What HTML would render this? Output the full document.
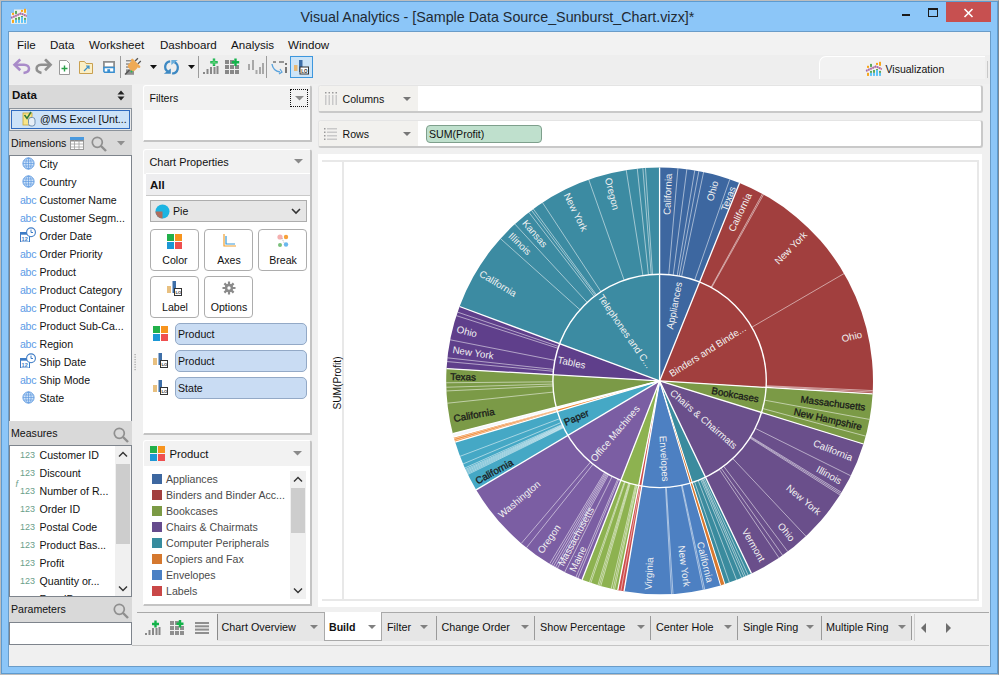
<!DOCTYPE html><html><head><meta charset="utf-8"><style>
*{margin:0;padding:0;box-sizing:border-box}
html,body{width:999px;height:675px;overflow:hidden;background:#8CC6F8;font-family:"Liberation Sans",sans-serif;color:#1a1a1a}
.a{position:absolute}
.t{position:absolute;white-space:nowrap;font-size:11px;line-height:13px}
</style></head><body><div class="a" style="left:0;top:0;width:999px;height:675px;border:1px solid #BDBDBD;border-right-color:#7A8A99"></div><div class="a" style="left:1px;top:1px;width:997px;height:673px;border:1px solid #5D9BD0"></div><div class="a" style="left:8px;top:31px;width:983px;height:636px;background:#F0F0F0;border:1px solid #6A9CC8"></div><div class="a" style="left:9px;top:32px;width:981px;height:23px;background:#F2F2F2"></div><div class="a" style="left:9px;top:55px;width:981px;height:29px;background:#EEEEEE"></div><svg class="a" style="left:9px;top:6px;" width="20" height="20" viewBox="0 0 20 20"><path d="M2 7 H17.8 V17.8 H2 Z" fill="#FAF6EE" opacity="0.9"/><path d="M5 3.5 H17.8 V7 H5 Z" fill="#FAF6EE" opacity="0.9"/><g fill="#F7A71B"><rect x="3" y="6.8" width="2" height="2.1"/><rect x="3" y="13.8" width="2" height="3.1"/><rect x="12" y="3.9" width="2" height="2"/><rect x="15" y="2.8" width="2" height="4"/></g><g fill="#5DA85D"><rect x="6" y="4.9" width="2" height="3"/><rect x="6" y="11.9" width="2" height="2"/><rect x="9" y="11" width="2" height="2.9"/><rect x="12" y="10" width="2" height="1"/><rect x="15" y="11.9" width="2" height="2"/></g><g fill="#5EC3F7"><rect x="6" y="13.9" width="2" height="3"/><rect x="9" y="13.9" width="2" height="3"/><rect x="12" y="11" width="2" height="5.9"/><rect x="15" y="13.9" width="2" height="3"/></g><polyline points="2.1,11.9 11.9,7.4 17.8,10.1" fill="none" stroke="#E79AA0" stroke-width="1.8"/><polyline points="2.1,11.9 11.9,7.4 17.8,10.1" fill="none" stroke="#8A6FC0" stroke-width="1.8" stroke-dasharray="1.2 1.2"/></svg><div class="t" style="left:300.5px;top:9.90px;font-size:14.3px;line-height:14.3px;color:#1F2A33">Visual Analytics - [Sample Data Source_Sunburst_Chart.vizx]*</div><div class="a" style="left:902px;top:14px;width:8px;height:2px;background:#1A1A1A"></div><div class="a" style="left:928px;top:8px;width:10px;height:9px;border:1px solid #1A1A1A;border-top-width:2px"></div><div class="a" style="left:946px;top:2px;width:45px;height:20px;background:#C75050"></div><svg class="a" style="left:963px;top:8px;" width="11" height="10" viewBox="0 0 11 10"><path d="M1.5 1 L9.5 9 M9.5 1 L1.5 9" stroke="#FFFFFF" stroke-width="1.6"/></svg><div class="t" style="left:17px;top:39.18px;font-size:11.6px;line-height:11.6px;color:#111">File</div><div class="t" style="left:50px;top:39.18px;font-size:11.6px;line-height:11.6px;color:#111">Data</div><div class="t" style="left:89px;top:39.18px;font-size:11.6px;line-height:11.6px;color:#111">Worksheet</div><div class="t" style="left:160px;top:39.18px;font-size:11.6px;line-height:11.6px;color:#111">Dashboard</div><div class="t" style="left:231px;top:39.18px;font-size:11.6px;line-height:11.6px;color:#111">Analysis</div><div class="t" style="left:288px;top:39.18px;font-size:11.6px;line-height:11.6px;color:#111">Window</div><svg class="a" style="left:10px;top:55px;" width="50" height="25" viewBox="0 0 50 25"><path d="M9.3 5.3 L4.6 9.8 L9.3 14.3" fill="none" stroke="#A98BC9" stroke-width="2.7" stroke-linecap="square"/><path d="M5 9.8 H14 C17.3 9.8 19 11.8 19 13.8 C19 16 17 17.6 13.5 17.9" fill="none" stroke="#A98BC9" stroke-width="2.5"/><path d="M36 5.3 L40.5 9.8 L36 14.3" fill="none" stroke="#8F8F8F" stroke-width="2.7" stroke-linecap="square"/><path d="M40 9.8 H31 C27.7 9.8 26.6 12 26.6 13.6 C26.6 15.6 28.3 17.3 31.5 17.9" fill="none" stroke="#8F8F8F" stroke-width="2.5"/></svg><svg class="a" style="left:58px;top:60px;" width="14" height="16" viewBox="0 0 14 16"><path d="M1.5 0.5 H8.5 L11.5 3.5 V14.5 H1.5 Z" fill="#FFF" stroke="#9A9A9A"/><path d="M6.5 5.5 V11.5 M3.5 8.5 H9.5" stroke="#2AA04A" stroke-width="1.4"/></svg><svg class="a" style="left:79px;top:60px;" width="16" height="15" viewBox="0 0 16 15"><path d="M0.5 1.5 H5.5 L7 3.5 H13.5 V13.5 H0.5 Z" fill="#FBEFC6" stroke="#C9A050"/><path d="M5 11 L10 6 M7 6 H10 V9" fill="none" stroke="#3A8FC8" stroke-width="1.2"/></svg><svg class="a" style="left:95px;top:55px;" width="50" height="25" viewBox="0 0 50 25"><path d="M8.9 6.9 H19.1 V12.5 H8.9 Z" fill="#FFF" stroke="#8F8F8F" stroke-width="1.8"/><path d="M8.9 12.5 H19.1 V17.2 H9.6 L8.9 16.5 Z" fill="#FFF" stroke="#3A8FD0" stroke-width="1.6"/><rect x="12.3" y="14.2" width="2.8" height="3" fill="#3A8FD0"/><g fill="#8F8F8F"><rect x="31" y="5" width="8" height="1.5"/><rect x="31" y="8.3" width="7" height="1.5"/><rect x="31" y="11.3" width="6" height="1.5"/><rect x="31" y="14.3" width="8" height="5.5"/></g><path d="M30 19.5 L34.5 15" stroke="#555" stroke-width="1.5"/><g transform="translate(38 11) rotate(45)"><rect x="-4.5" y="-4" width="9" height="8.5" rx="3" fill="#EFAA55"/><rect x="-6" y="-5" width="12" height="2.5" rx="1" fill="#EFAA55"/><path d="M-2 -5 V-9 M2 -5 V-9" stroke="#555" stroke-width="1.3"/></g><circle cx="36.5" cy="16.5" r="0.9" fill="#1FC24A"/></svg><div class="a" style="left:120px;top:56px;width:1px;height:22px;background:#9C9C9C"></div><svg class="a" style="left:150px;top:65px;" width="7" height="4" viewBox="0 0 7 4"><path d="M0 0 H7 L3.5 4 Z" fill="#111"/></svg><svg class="a" style="left:158px;top:54px;" width="26" height="26" viewBox="0 0 26 26"><path d="M12.2 7.3 A5.6 5.6 0 0 0 9.8 17.6" fill="none" stroke="#3D89C3" stroke-width="2.3"/><path d="M5.8 19.7 L12.8 19.7 L12.8 14.6 Z" fill="#3D89C3"/><path d="M13.3 5.9 L19.8 5.9 L13.3 11 Z" fill="#6AAEDC"/><path d="M16.6 8.4 A4.6 5.6 0 0 1 14.2 19.2" fill="none" stroke="#3D89C3" stroke-width="2.3"/></svg><svg class="a" style="left:188px;top:65px;" width="7" height="4" viewBox="0 0 7 4"><path d="M0 0 H7 L3.5 4 Z" fill="#111"/></svg><div class="a" style="left:198px;top:56px;width:1px;height:22px;background:#9C9C9C"></div><svg class="a" style="left:203px;top:58px;" width="16" height="17" viewBox="0 0 16 17"><rect x="0" y="14" width="2" height="2" fill="#888"/><rect x="3.5" y="11" width="2" height="5" fill="#888"/><rect x="7" y="9" width="2" height="7" fill="#888"/><rect x="10.5" y="9" width="2" height="7" fill="#888"/><rect x="13.5" y="8" width="2" height="8" fill="#888"/><path d="M11 0.5 V8 M7.3 4.2 H14.7" stroke="#13B24A" stroke-width="2.4"/><path d="M11 1.5 V7 M8.3 4.2 H13.7" stroke="#7BE08A" stroke-width="0.8"/></svg><svg class="a" style="left:225px;top:58px;" width="16" height="17" viewBox="0 0 16 17"><g fill="#888"><rect x="0" y="2" width="4" height="4"/><rect x="5" y="2" width="4" height="4"/><rect x="0" y="7" width="4" height="4"/><rect x="5" y="7" width="4" height="4"/><rect x="10" y="7" width="4" height="4"/><rect x="0" y="12" width="4" height="4"/><rect x="5" y="12" width="4" height="4"/><rect x="10" y="12" width="4" height="4"/></g><path d="M10.5 0.5 V8 M6.8 4.2 H14.2" stroke="#13B24A" stroke-width="2.4"/></svg><svg class="a" style="left:248px;top:58px;" width="16" height="17" viewBox="0 0 16 17"><g fill="#A8A8A8"><rect x="0" y="6" width="2" height="6"/><rect x="4" y="2" width="2" height="10"/><rect x="7.5" y="12" width="2" height="4"/><rect x="11" y="9" width="2" height="7"/><rect x="14" y="5" width="2" height="11"/></g></svg><div class="a" style="left:266px;top:56px;width:1px;height:22px;background:#9C9C9C"></div><svg class="a" style="left:271px;top:58px;" width="16" height="17" viewBox="0 0 16 17"><path d="M2 4 H5 M8 4 H13" stroke="#777" stroke-width="1.5"/><rect x="14" y="5" width="2" height="2" fill="#777"/><rect x="14" y="9" width="2" height="6" fill="#777"/><path d="M1 6 Q2 13 9 14" fill="none" stroke="#5AA3DD" stroke-width="1.4"/><path d="M9 11 L11 14 L8 16" fill="none" stroke="#5AA3DD" stroke-width="1.2"/></svg><div class="a" style="left:290px;top:56px;width:23px;height:22px;background:#CCE4F7;border:1px solid #3D97DE"></div><svg class="a" style="left:294px;top:59px;" width="15" height="16" viewBox="0 0 15 16"><rect x="0" y="6" width="3.5" height="6" fill="#E8B872"/><rect x="5" y="1" width="3.5" height="12" fill="#3E6FA8"/><rect x="6" y="8" width="8.5" height="7" fill="#FFF" stroke="#333" stroke-width="1"/><text x="7.3" y="13.7" font-size="4.5" font-family="Liberation Sans" font-weight="bold" fill="#333">LO</text></svg><div class="a" style="left:819px;top:56px;width:166px;height:23px;background:#F2F2F2;border-top:1px solid #FFF;border-left:1px solid #FFF;border-top-left-radius:7px"></div><div class="a" style="left:987px;top:61px;width:1px;height:17px;background:#C8C8C8"></div><svg class="a" style="left:863.5px;top:59.2px;" width="20" height="20" viewBox="0 0 20 20"><path d="M2 7 H17.8 V17.8 H2 Z" fill="#F2F2F2" opacity="0.9"/><path d="M5 3.5 H17.8 V7 H5 Z" fill="#F2F2F2" opacity="0.9"/><g fill="#F7A71B"><rect x="3" y="6.8" width="2" height="2.1"/><rect x="3" y="13.8" width="2" height="3.1"/><rect x="12" y="3.9" width="2" height="2"/><rect x="15" y="2.8" width="2" height="4"/></g><g fill="#5DA85D"><rect x="6" y="4.9" width="2" height="3"/><rect x="6" y="11.9" width="2" height="2"/><rect x="9" y="11" width="2" height="2.9"/><rect x="12" y="10" width="2" height="1"/><rect x="15" y="11.9" width="2" height="2"/></g><g fill="#5EC3F7"><rect x="6" y="13.9" width="2" height="3"/><rect x="9" y="13.9" width="2" height="3"/><rect x="12" y="11" width="2" height="5.9"/><rect x="15" y="13.9" width="2" height="3"/></g><polyline points="2.1,11.9 11.9,7.4 17.8,10.1" fill="none" stroke="#E79AA0" stroke-width="1.8"/><polyline points="2.1,11.9 11.9,7.4 17.8,10.1" fill="none" stroke="#8A6FC0" stroke-width="1.8" stroke-dasharray="1.2 1.2"/></svg><div class="t" style="left:885.5px;top:64.11px;font-size:10.5px;line-height:10.5px;color:#111">Visualization</div><div class="a" style="left:9px;top:85px;width:123px;height:23px;background:#D9D9D9"></div><div class="t" style="left:12px;top:90.27px;font-size:11.5px;line-height:11.5px;font-weight:bold;color:#111">Data</div><svg class="a" style="left:117px;top:90px;" width="8" height="10.6" viewBox="0 0 8 10.6"><path d="M0.5 4.5 L4 0.5 L7.5 4.5 Z M0.5 6.5 L4 10.5 L7.5 6.5 Z" fill="#222"/></svg><div class="a" style="left:9px;top:108px;width:123px;height:23px;background:#D9D9D9"></div><div class="a" style="left:9px;top:108px;width:123px;height:23px;background:#E8E8E8;border:1px solid #8C939B"></div><div class="a" style="left:11px;top:110px;width:119px;height:19px;background:#CCE2F8;border:1px solid #2F6BC0"></div><svg class="a" style="left:22px;top:110px;" width="14" height="17" viewBox="0 0 14 17"><rect x="1" y="3" width="9" height="12" fill="#F8E58A" stroke="#C8A838" stroke-width="0.8"/><path d="M2.5 5 L5 8.5 L9 2" fill="none" stroke="#2D7A3A" stroke-width="1.5"/><rect x="6.5" y="7.5" width="6.5" height="8.5" rx="2.5" fill="#E6EEF6" stroke="#6688AA" stroke-width="0.9"/></svg><div class="t" style="left:40px;top:114.03px;font-size:10.6px;line-height:10.6px;color:#111">@MS Excel [Unt...</div><div class="a" style="left:9px;top:131px;width:123px;height:24px;background:#D9D9D9"></div><div class="t" style="left:11px;top:138.03px;font-size:10.6px;line-height:10.6px;color:#111">Dimensions</div><svg class="a" style="left:70px;top:137px;" width="14" height="13" viewBox="0 0 14 13"><rect x="0.5" y="0.5" width="13" height="12" fill="#FFF" stroke="#9A9A9A"/><path d="M0.5 3.5 H13.5" stroke="#8A8A8A" stroke-width="2"/><path d="M0.5 7 H13.5 M0.5 10 H13.5 M4.5 0.5 V12.5 M9 0.5 V12.5" stroke="#A0A0A0" stroke-width="0.8"/><rect x="0" y="0" width="14" height="3" fill="#4A9ADF"/></svg><svg class="a" style="left:91px;top:136px;" width="16" height="16" viewBox="0 0 16 16"><circle cx="6.3" cy="6.3" r="5" fill="none" stroke="#8F8F8F" stroke-width="1.7"/><path d="M10 10 L15 15" stroke="#8F8F8F" stroke-width="2.4"/></svg><svg class="a" style="left:117px;top:141px;" width="8" height="5" viewBox="0 0 8 5"><path d="M0 0 H8 L4 4.5 Z" fill="#8F8F8F"/></svg><div class="a" style="left:9px;top:155px;width:123px;height:267px;background:#FFF;border:1px solid #7E848C"></div><svg class="a" style="left:22px;top:157px;" width="14" height="14" viewBox="0 0 14 14"><circle cx="6.5" cy="6.5" r="5.6" fill="#CFE3F9" stroke="#5E9AE0" stroke-width="1"/><path d="M1 6.5 H12 M6.5 1 V12 M2 4 H11 M2 9 H11" stroke="#5E9AE0" stroke-width="0.7"/><ellipse cx="6.5" cy="6.5" rx="2.6" ry="5.6" fill="none" stroke="#5E9AE0" stroke-width="0.7"/></svg><div class="t" style="left:39.5px;top:159.03px;font-size:10.6px;line-height:10.6px;color:#111">City</div><svg class="a" style="left:22px;top:175px;" width="14" height="14" viewBox="0 0 14 14"><circle cx="6.5" cy="6.5" r="5.6" fill="#CFE3F9" stroke="#5E9AE0" stroke-width="1"/><path d="M1 6.5 H12 M6.5 1 V12 M2 4 H11 M2 9 H11" stroke="#5E9AE0" stroke-width="0.7"/><ellipse cx="6.5" cy="6.5" rx="2.6" ry="5.6" fill="none" stroke="#5E9AE0" stroke-width="0.7"/></svg><div class="t" style="left:39.5px;top:177.03px;font-size:10.6px;line-height:10.6px;color:#111">Country</div><div class="t" style="left:20px;top:195.03px;font-size:10.6px;line-height:10.6px;color:#5B9BE6;letter-spacing:-0.3px">abc</div><div class="t" style="left:39.5px;top:195.03px;font-size:10.6px;line-height:10.6px;color:#111">Customer Name</div><div class="t" style="left:20px;top:213.03px;font-size:10.6px;line-height:10.6px;color:#5B9BE6;letter-spacing:-0.3px">abc</div><div class="t" style="left:39.5px;top:213.03px;font-size:10.6px;line-height:10.6px;color:#111">Customer Segm...</div><svg class="a" style="left:20px;top:227px;" width="16" height="15" viewBox="0 0 16 15"><rect x="0.5" y="5.5" width="9" height="9.5" fill="#FFF" stroke="#3E7CC6"/><rect x="0.5" y="5.5" width="9" height="2.2" fill="#3E7CC6"/><text x="1.6" y="13.8" font-size="5.5" font-weight="bold" font-family="Liberation Sans" fill="#3E7CC6">12</text><circle cx="11" cy="5.3" r="4.4" fill="#FFF" stroke="#3E7CC6" stroke-width="1.1"/><path d="M11 2.6 V5.5 H13" fill="none" stroke="#3E7CC6" stroke-width="1"/></svg><div class="t" style="left:39.5px;top:231.03px;font-size:10.6px;line-height:10.6px;color:#111">Order Date</div><div class="t" style="left:20px;top:249.03px;font-size:10.6px;line-height:10.6px;color:#5B9BE6;letter-spacing:-0.3px">abc</div><div class="t" style="left:39.5px;top:249.03px;font-size:10.6px;line-height:10.6px;color:#111">Order Priority</div><div class="t" style="left:20px;top:267.03px;font-size:10.6px;line-height:10.6px;color:#5B9BE6;letter-spacing:-0.3px">abc</div><div class="t" style="left:39.5px;top:267.03px;font-size:10.6px;line-height:10.6px;color:#111">Product</div><div class="t" style="left:20px;top:285.03px;font-size:10.6px;line-height:10.6px;color:#5B9BE6;letter-spacing:-0.3px">abc</div><div class="t" style="left:39.5px;top:285.03px;font-size:10.6px;line-height:10.6px;color:#111">Product Category</div><div class="t" style="left:20px;top:303.03px;font-size:10.6px;line-height:10.6px;color:#5B9BE6;letter-spacing:-0.3px">abc</div><div class="t" style="left:39.5px;top:303.03px;font-size:10.6px;line-height:10.6px;color:#111">Product Container</div><div class="t" style="left:20px;top:321.03px;font-size:10.6px;line-height:10.6px;color:#5B9BE6;letter-spacing:-0.3px">abc</div><div class="t" style="left:39.5px;top:321.03px;font-size:10.6px;line-height:10.6px;color:#111">Product Sub-Ca...</div><div class="t" style="left:20px;top:339.03px;font-size:10.6px;line-height:10.6px;color:#5B9BE6;letter-spacing:-0.3px">abc</div><div class="t" style="left:39.5px;top:339.03px;font-size:10.6px;line-height:10.6px;color:#111">Region</div><svg class="a" style="left:20px;top:353px;" width="16" height="15" viewBox="0 0 16 15"><rect x="0.5" y="5.5" width="9" height="9.5" fill="#FFF" stroke="#3E7CC6"/><rect x="0.5" y="5.5" width="9" height="2.2" fill="#3E7CC6"/><text x="1.6" y="13.8" font-size="5.5" font-weight="bold" font-family="Liberation Sans" fill="#3E7CC6">12</text><circle cx="11" cy="5.3" r="4.4" fill="#FFF" stroke="#3E7CC6" stroke-width="1.1"/><path d="M11 2.6 V5.5 H13" fill="none" stroke="#3E7CC6" stroke-width="1"/></svg><div class="t" style="left:39.5px;top:357.03px;font-size:10.6px;line-height:10.6px;color:#111">Ship Date</div><div class="t" style="left:20px;top:375.03px;font-size:10.6px;line-height:10.6px;color:#5B9BE6;letter-spacing:-0.3px">abc</div><div class="t" style="left:39.5px;top:375.03px;font-size:10.6px;line-height:10.6px;color:#111">Ship Mode</div><svg class="a" style="left:22px;top:391px;" width="14" height="14" viewBox="0 0 14 14"><circle cx="6.5" cy="6.5" r="5.6" fill="#CFE3F9" stroke="#5E9AE0" stroke-width="1"/><path d="M1 6.5 H12 M6.5 1 V12 M2 4 H11 M2 9 H11" stroke="#5E9AE0" stroke-width="0.7"/><ellipse cx="6.5" cy="6.5" rx="2.6" ry="5.6" fill="none" stroke="#5E9AE0" stroke-width="0.7"/></svg><div class="t" style="left:39.5px;top:393.03px;font-size:10.6px;line-height:10.6px;color:#111">State</div><svg class="a" style="left:134px;top:354px;" width="3" height="18" viewBox="0 0 3 18"><rect x="0.5" y="0.0" width="1.2" height="1.2" fill="#A0A0A0"/><rect x="0.5" y="2.5" width="1.2" height="1.2" fill="#A0A0A0"/><rect x="0.5" y="5.0" width="1.2" height="1.2" fill="#A0A0A0"/><rect x="0.5" y="7.5" width="1.2" height="1.2" fill="#A0A0A0"/><rect x="0.5" y="10.0" width="1.2" height="1.2" fill="#A0A0A0"/><rect x="0.5" y="12.5" width="1.2" height="1.2" fill="#A0A0A0"/><rect x="0.5" y="15.0" width="1.2" height="1.2" fill="#A0A0A0"/></svg><div class="a" style="left:9px;top:421px;width:123px;height:24px;background:#D9D9D9"></div><div class="t" style="left:11px;top:428.03px;font-size:10.6px;line-height:10.6px;color:#111">Measures</div><svg class="a" style="left:113px;top:427px;" width="16" height="16" viewBox="0 0 16 16"><circle cx="6.3" cy="6.3" r="5" fill="none" stroke="#8F8F8F" stroke-width="1.7"/><path d="M10 10 L15 15" stroke="#8F8F8F" stroke-width="2.4"/></svg><div class="a" style="left:9px;top:445px;width:123px;height:152px;background:#FFF;border:1px solid #7E848C;overflow:hidden"></div><div class="a" style="left:10px;top:446px;width:105px;height:150px;overflow:hidden"><div class="t" style="left:10px;top:5.08px;font-size:9px;line-height:9px;color:#6AA08A">123</div><div class="t" style="left:29.5px;top:3.73px;font-size:10.6px;line-height:10.6px;color:#111">Customer ID</div><div class="t" style="left:10px;top:23.08px;font-size:9px;line-height:9px;color:#6AA08A">123</div><div class="t" style="left:29.5px;top:21.73px;font-size:10.6px;line-height:10.6px;color:#111">Discount</div><div class="t" style="left:10px;top:41.08px;font-size:9px;line-height:9px;color:#6AA08A">123</div><div class="t" style="left:29.5px;top:39.73px;font-size:10.6px;line-height:10.6px;color:#111">Number of R...</div><div class="t" style="left:10px;top:59.08px;font-size:9px;line-height:9px;color:#6AA08A">123</div><div class="t" style="left:29.5px;top:57.73px;font-size:10.6px;line-height:10.6px;color:#111">Order ID</div><div class="t" style="left:10px;top:77.08px;font-size:9px;line-height:9px;color:#6AA08A">123</div><div class="t" style="left:29.5px;top:75.73px;font-size:10.6px;line-height:10.6px;color:#111">Postal Code</div><div class="t" style="left:10px;top:95.08px;font-size:9px;line-height:9px;color:#6AA08A">123</div><div class="t" style="left:29.5px;top:93.73px;font-size:10.6px;line-height:10.6px;color:#111">Product Bas...</div><div class="t" style="left:10px;top:113.08px;font-size:9px;line-height:9px;color:#6AA08A">123</div><div class="t" style="left:29.5px;top:111.73px;font-size:10.6px;line-height:10.6px;color:#111">Profit</div><div class="t" style="left:10px;top:131.08px;font-size:9px;line-height:9px;color:#6AA08A">123</div><div class="t" style="left:29.5px;top:129.73px;font-size:10.6px;line-height:10.6px;color:#111">Quantity or...</div><div class="t" style="left:10px;top:149.08px;font-size:9px;line-height:9px;color:#6AA08A">123</div><div class="t" style="left:29.5px;top:147.73px;font-size:10.6px;line-height:10.6px;color:#111">Row ID</div></div><div class="t" style="left:15.5px;top:480.38px;font-size:9px;line-height:9px;color:#6AA08A;font-style:italic">f</div><div class="a" style="left:115px;top:446px;width:16px;height:150px;background:#F0F0F0"></div><div class="a" style="left:116px;top:464px;width:14px;height:80px;background:#CDCDCD"></div><svg class="a" style="left:118px;top:451px;" width="10" height="7" viewBox="0 0 10 7"><path d="M1 5.5 L5 1.5 L9 5.5" fill="none" stroke="#333" stroke-width="1.4"/></svg><svg class="a" style="left:118px;top:585px;" width="10" height="7" viewBox="0 0 10 7"><path d="M1 1.5 L5 5.5 L9 1.5" fill="none" stroke="#333" stroke-width="1.4"/></svg><div class="a" style="left:9px;top:597px;width:123px;height:25px;background:#D9D9D9"></div><div class="t" style="left:11px;top:604.03px;font-size:10.6px;line-height:10.6px;color:#111">Parameters</div><svg class="a" style="left:113px;top:603px;" width="16" height="16" viewBox="0 0 16 16"><circle cx="6.3" cy="6.3" r="5" fill="none" stroke="#8F8F8F" stroke-width="1.7"/><path d="M10 10 L15 15" stroke="#8F8F8F" stroke-width="2.4"/></svg><div class="a" style="left:9px;top:622px;width:123px;height:23px;background:#FFF;border:1px solid #7E848C"></div><div class="a" style="left:143px;top:85px;width:169px;height:57px;background:#FFF;border:1px solid #FFF;border-right:2px solid #C4C4C4;border-bottom:2px solid #C4C4C4;border-radius:3px 3px 1px 1px;overflow:hidden"><div class="a" style="left:0;top:0;width:100%;height:24px;background:#F2F2F2"></div></div><div class="t" style="left:149.5px;top:93.03px;font-size:10.6px;line-height:10.6px;color:#111">Filters</div><div class="a" style="left:290px;top:89px;width:18px;height:18px;border:1px dotted #111"></div><svg class="a" style="left:295px;top:96px;" width="9" height="5" viewBox="0 0 9 5"><path d="M0 0 H9 L4.5 4.5 Z" fill="#8A8A8A"/></svg><div class="a" style="left:143px;top:149px;width:169px;height:286px;background:#FFF;border:1px solid #FFF;border-right:2px solid #C4C4C4;border-bottom:2px solid #C4C4C4;border-radius:3px 3px 1px 1px;overflow:hidden"><div class="a" style="left:0;top:0;width:100%;height:24px;background:#F2F2F2"></div></div><div class="t" style="left:149.5px;top:156.77px;font-size:10.9px;line-height:10.9px;color:#111">Chart Properties</div><svg class="a" style="left:294px;top:159px;" width="9" height="5" viewBox="0 0 9 5"><path d="M0 0 H9 L4.5 4.5 Z" fill="#8A8A8A"/></svg><div class="a" style="left:146px;top:173px;width:164px;height:23px;background:#EDEDEF;border-top:1px solid #FFF;border-bottom:1px solid #C9C9C9"></div><div class="t" style="left:150px;top:180.27px;font-size:11.5px;line-height:11.5px;font-weight:bold;color:#111">All</div><div class="a" style="left:150px;top:200px;width:157px;height:22px;background:#E6E6E6;border:1px solid #ADADAD"></div><svg class="a" style="left:155px;top:204px;" width="15" height="15" viewBox="0 0 15 15"><circle cx="7.5" cy="7.5" r="7" fill="#1BB4E2"/><path d="M7.5 7.5 V14.5 A7 7 0 0 1 0.5 7.5 Z" fill="#AB6D5E"/></svg><div class="t" style="left:173px;top:206.03px;font-size:10.6px;line-height:10.6px;color:#111">Pie</div><svg class="a" style="left:291px;top:208px;" width="10" height="7" viewBox="0 0 10 7"><path d="M1 1 L5 5 L9 1" fill="none" stroke="#333" stroke-width="1.6"/></svg><div class="a" style="left:150px;top:229px;width:49px;height:42px;background:#FFF;border:1px solid #ADADAD;border-radius:4px"></div><svg class="a" style="left:166px;top:234px;" width="18" height="16" viewBox="0 0 18 16"><rect x="1" y="0" width="7" height="7" fill="#22B04A"/><rect x="9" y="0" width="7" height="7" fill="#F7941E"/><rect x="1" y="8" width="7" height="7" fill="#1C97D5"/><rect x="9" y="8" width="7" height="7" fill="#EF4F4F"/></svg><div class="t" style="left:150.5px;top:254.53px;width:49px;text-align:center;font-size:10.6px;line-height:10.6px;color:#111">Color</div><div class="a" style="left:204px;top:229px;width:49px;height:42px;background:#FFF;border:1px solid #ADADAD;border-radius:4px"></div><svg class="a" style="left:220px;top:234px;" width="18" height="16" viewBox="0 0 18 16"><path d="M4 0 V12 H16" fill="none" stroke="#F0A030" stroke-width="1.2"/><path d="M6 2 V10 H15" fill="none" stroke="#3A9AD9" stroke-width="1.2"/></svg><div class="t" style="left:204.5px;top:254.53px;width:49px;text-align:center;font-size:10.6px;line-height:10.6px;color:#111">Axes</div><div class="a" style="left:258px;top:229px;width:49px;height:42px;background:#FFF;border:1px solid #ADADAD;border-radius:4px"></div><svg class="a" style="left:274px;top:234px;" width="18" height="16" viewBox="0 0 18 16"><circle cx="6" cy="3" r="2.6" fill="#F4B0B0"/><circle cx="12" cy="3" r="2.2" fill="#F7A13A"/><circle cx="6" cy="11" r="2" fill="#7BC07B"/><circle cx="12" cy="10.5" r="2.2" fill="#6AB8EE"/><path d="M8 4 L10 9" stroke="#999" stroke-width="0.7" stroke-dasharray="1,1"/></svg><div class="t" style="left:258.5px;top:254.53px;width:49px;text-align:center;font-size:10.6px;line-height:10.6px;color:#111">Break</div><div class="a" style="left:150px;top:276px;width:49px;height:42px;background:#FFF;border:1px solid #ADADAD;border-radius:4px"></div><svg class="a" style="left:166px;top:281px;" width="18" height="16" viewBox="0 0 18 16"><rect x="1" y="5" width="4" height="7" fill="#E8C080"/><rect x="6.5" y="0" width="3.5" height="12" fill="#3E6FA8"/><rect x="8.5" y="7.5" width="7" height="7" fill="#FFF" stroke="#333" stroke-width="1"/><text x="9.5" y="13" font-size="4.2" font-family="Liberation Sans" font-weight="bold" fill="#333">LO</text></svg><div class="t" style="left:150.5px;top:301.53px;width:49px;text-align:center;font-size:10.6px;line-height:10.6px;color:#111">Label</div><div class="a" style="left:204px;top:276px;width:49px;height:42px;background:#FFF;border:1px solid #ADADAD;border-radius:4px"></div><svg class="a" style="left:220px;top:281px;" width="18" height="16" viewBox="0 0 18 16"><g transform="translate(9 7)"><circle r="4.2" fill="#8A8A8A"/><circle r="1.7" fill="#FFF"/><g stroke="#8A8A8A" stroke-width="2.2"><path d="M0 -6.5 V6.5 M-6.5 0 H6.5 M-4.6 -4.6 L4.6 4.6 M-4.6 4.6 L4.6 -4.6"/></g><circle r="1.7" fill="#FFF"/></g></svg><div class="t" style="left:204.5px;top:301.53px;width:49px;text-align:center;font-size:10.6px;line-height:10.6px;color:#111">Options</div><svg class="a" style="left:152px;top:326px;" width="17" height="16" viewBox="0 0 17 16"><rect x="1" y="0" width="7" height="7" fill="#22B04A"/><rect x="9" y="0" width="7" height="7" fill="#F7941E"/><rect x="1" y="8" width="7" height="7" fill="#1C97D5"/><rect x="9" y="8" width="7" height="7" fill="#EF4F4F"/></svg><div class="a" style="left:175px;top:323px;width:132px;height:22px;background:#C9DCF3;border:1px solid #93A9C6;border-radius:5px"></div><div class="t" style="left:178px;top:328.73px;font-size:10.6px;line-height:10.6px;color:#111">Product</div><svg class="a" style="left:152px;top:353px;" width="17" height="16" viewBox="0 0 17 16"><rect x="1" y="5" width="4" height="7" fill="#E8C080"/><rect x="6.5" y="0" width="3.5" height="12" fill="#3E6FA8"/><rect x="8.5" y="7.5" width="7" height="7" fill="#FFF" stroke="#333" stroke-width="1"/><text x="9.5" y="13" font-size="4.2" font-family="Liberation Sans" font-weight="bold" fill="#333">LO</text></svg><div class="a" style="left:175px;top:350px;width:132px;height:22px;background:#C9DCF3;border:1px solid #93A9C6;border-radius:5px"></div><div class="t" style="left:178px;top:355.73px;font-size:10.6px;line-height:10.6px;color:#111">Product</div><svg class="a" style="left:152px;top:380px;" width="17" height="16" viewBox="0 0 17 16"><rect x="1" y="5" width="4" height="7" fill="#E8C080"/><rect x="6.5" y="0" width="3.5" height="12" fill="#3E6FA8"/><rect x="8.5" y="7.5" width="7" height="7" fill="#FFF" stroke="#333" stroke-width="1"/><text x="9.5" y="13" font-size="4.2" font-family="Liberation Sans" font-weight="bold" fill="#333">LO</text></svg><div class="a" style="left:175px;top:377px;width:132px;height:22px;background:#C9DCF3;border:1px solid #93A9C6;border-radius:5px"></div><div class="t" style="left:178px;top:382.73px;font-size:10.6px;line-height:10.6px;color:#111">State</div><div class="a" style="left:143px;top:440px;width:169px;height:166px;background:#FFF;border:1px solid #FFF;border-right:2px solid #C4C4C4;border-bottom:2px solid #C4C4C4;border-radius:3px 3px 1px 1px;overflow:hidden"><div class="a" style="left:0;top:0;width:100%;height:25px;background:#F2F2F2"></div></div><svg class="a" style="left:149px;top:446px;" width="17" height="16" viewBox="0 0 17 16"><rect x="1" y="0" width="7" height="7" fill="#22B04A"/><rect x="9" y="0" width="7" height="7" fill="#F7941E"/><rect x="1" y="8" width="7" height="7" fill="#1C97D5"/><rect x="9" y="8" width="7" height="7" fill="#EF4F4F"/></svg><div class="t" style="left:169.5px;top:448.93px;font-size:11.3px;line-height:11.3px;color:#111">Product</div><svg class="a" style="left:293px;top:451px;" width="9" height="5" viewBox="0 0 9 5"><path d="M0 0 H9 L4.5 4.5 Z" fill="#8A8A8A"/></svg><div class="a" style="left:152px;top:474px;width:10px;height:10px;background:#3D67A0"></div><div class="t" style="left:166px;top:473.73px;font-size:10.6px;line-height:10.6px;color:#4A4A4A">Appliances</div><div class="a" style="left:152px;top:490px;width:10px;height:10px;background:#A23F3F"></div><div class="t" style="left:166px;top:489.73px;font-size:10.6px;line-height:10.6px;color:#4A4A4A">Binders and Binder Acc...</div><div class="a" style="left:152px;top:506px;width:10px;height:10px;background:#7B9A45"></div><div class="t" style="left:166px;top:505.73px;font-size:10.6px;line-height:10.6px;color:#4A4A4A">Bookcases</div><div class="a" style="left:152px;top:522px;width:10px;height:10px;background:#664B8D"></div><div class="t" style="left:166px;top:521.73px;font-size:10.6px;line-height:10.6px;color:#4A4A4A">Chairs &amp; Chairmats</div><div class="a" style="left:152px;top:538px;width:10px;height:10px;background:#378C9E"></div><div class="t" style="left:166px;top:537.73px;font-size:10.6px;line-height:10.6px;color:#4A4A4A">Computer Peripherals</div><div class="a" style="left:152px;top:554px;width:10px;height:10px;background:#D5782E"></div><div class="t" style="left:166px;top:553.73px;font-size:10.6px;line-height:10.6px;color:#4A4A4A">Copiers and Fax</div><div class="a" style="left:152px;top:570px;width:10px;height:10px;background:#4A80C4"></div><div class="t" style="left:166px;top:569.73px;font-size:10.6px;line-height:10.6px;color:#4A4A4A">Envelopes</div><div class="a" style="left:152px;top:586px;width:10px;height:10px;background:#C94747"></div><div class="t" style="left:166px;top:585.73px;font-size:10.6px;line-height:10.6px;color:#4A4A4A">Labels</div><div class="a" style="left:290px;top:471px;width:16px;height:128px;background:#F0F0F0"></div><div class="a" style="left:291px;top:488px;width:14px;height:45px;background:#CDCDCD"></div><svg class="a" style="left:293px;top:476px;" width="10" height="7" viewBox="0 0 10 7"><path d="M1 5.5 L5 1.5 L9 5.5" fill="none" stroke="#333" stroke-width="1.4"/></svg><svg class="a" style="left:293px;top:587px;" width="10" height="7" viewBox="0 0 10 7"><path d="M1 1.5 L5 5.5 L9 1.5" fill="none" stroke="#333" stroke-width="1.4"/></svg><div class="a" style="left:318px;top:85px;width:665px;height:28px;background:#FFF;border:1px solid #E4E4E4;border-right:2px solid #C9C9C9;border-bottom:2px solid #C9C9C9;border-radius:3px;overflow:hidden"><div class="a" style="left:0;top:0;width:99px;height:100%;background:#F2F1EE"></div></div><svg class="a" style="left:324px;top:92px;" width="14" height="14" viewBox="0 0 14 14"><rect x="1" y="0" width="1.5" height="1.5" fill="#9A9A9A"/><rect x="1" y="3" width="1.5" height="10" fill="#C9C9C9"/><rect x="4.5" y="0" width="1.5" height="1.5" fill="#9A9A9A"/><rect x="4.5" y="3" width="1.5" height="10" fill="#C9C9C9"/><rect x="8" y="0" width="1.5" height="1.5" fill="#9A9A9A"/><rect x="8" y="3" width="1.5" height="10" fill="#C9C9C9"/><rect x="11.5" y="0" width="1.5" height="1.5" fill="#9A9A9A"/><rect x="11.5" y="3" width="1.5" height="10" fill="#C9C9C9"/></svg><div class="t" style="left:342.5px;top:94.03px;font-size:10.6px;line-height:10.6px;color:#111">Columns</div><svg class="a" style="left:403px;top:97px;" width="8" height="5" viewBox="0 0 8 5"><path d="M0 0 H8 L4 4 Z" fill="#777"/></svg><div class="a" style="left:318px;top:120px;width:665px;height:28px;background:#FFF;border:1px solid #E4E4E4;border-right:2px solid #C9C9C9;border-bottom:2px solid #C9C9C9;border-radius:3px;overflow:hidden"><div class="a" style="left:0;top:0;width:99px;height:100%;background:#F2F1EE"></div></div><svg class="a" style="left:324px;top:127px;" width="14" height="14" viewBox="0 0 14 14"><rect x="0" y="1" width="1.5" height="1.5" fill="#9A9A9A"/><rect x="3" y="1" width="10" height="1.5" fill="#C9C9C9"/><rect x="0" y="4.5" width="1.5" height="1.5" fill="#9A9A9A"/><rect x="3" y="4.5" width="10" height="1.5" fill="#C9C9C9"/><rect x="0" y="8" width="1.5" height="1.5" fill="#9A9A9A"/><rect x="3" y="8" width="10" height="1.5" fill="#C9C9C9"/><rect x="0" y="11.5" width="1.5" height="1.5" fill="#9A9A9A"/><rect x="3" y="11.5" width="10" height="1.5" fill="#C9C9C9"/></svg><div class="t" style="left:342.5px;top:129.03px;font-size:10.6px;line-height:10.6px;color:#111">Rows</div><svg class="a" style="left:403px;top:132px;" width="8" height="5" viewBox="0 0 8 5"><path d="M0 0 H8 L4 4 Z" fill="#777"/></svg><div class="a" style="left:426px;top:125px;width:116px;height:18px;background:#BFE0CD;border:1px solid #7E9F8C;border-radius:4px"></div><div class="t" style="left:429px;top:129.03px;font-size:10.6px;line-height:10.6px;color:#111">SUM(Profit)</div><div class="a" style="left:318px;top:154px;width:664px;height:453px;background:#FFF"></div><div class="a" style="left:322px;top:160px;width:657px;height:441px;border-top:2px solid #E8E8E8;border-right:2px solid #E8E8E8;border-bottom:2px solid #E8E8E8"></div><div class="a" style="left:342px;top:160px;width:2px;height:441px;background:#E8E8E8"></div><div class="t" style="left:307.5px;top:377px;width:60px;height:12px;font-size:10.2px;line-height:12px;text-align:center;transform:rotate(-90deg);color:#111">SUM(Profit)</div><div class="a" style="left:137px;top:612px;width:852px;height:1px;background:#A9A9A9"></div><div class="a" style="left:132px;top:645px;width:857px;height:1px;background:#C4C4C4"></div><div class="a" style="left:217px;top:613px;width:694px;height:28px;background:#E6E6E6"></div><div class="a" style="left:217px;top:614px;width:1px;height:26px;background:#8A8A8A"></div><svg class="a" style="left:145px;top:620px;" width="16" height="16" viewBox="0 0 16 16"><rect x="0" y="13" width="2" height="2" fill="#888"/><rect x="3.5" y="10" width="2" height="5" fill="#888"/><rect x="7" y="8" width="2" height="7" fill="#888"/><rect x="10.5" y="8" width="2" height="7" fill="#888"/><rect x="13.5" y="7" width="2" height="8" fill="#888"/><path d="M10.5 0.5 V7.5 M7 4 H14" stroke="#13B24A" stroke-width="2.4"/></svg><svg class="a" style="left:170px;top:620px;" width="16" height="16" viewBox="0 0 16 16"><g fill="#8F8F8F"><rect x="0" y="1" width="4" height="4"/><rect x="5" y="1" width="4" height="4"/><rect x="0" y="6" width="4" height="4"/><rect x="5" y="6" width="4" height="4"/><rect x="10" y="6" width="4" height="4"/><rect x="0" y="11" width="4" height="4"/><rect x="5" y="11" width="4" height="4"/><rect x="10" y="11" width="4" height="4"/></g><path d="M10 0 V7.5 M6.5 3.7 H13.5" stroke="#13B24A" stroke-width="2.4"/></svg><svg class="a" style="left:195px;top:622px;" width="15" height="12" viewBox="0 0 15 12"><g fill="#8F8F8F"><rect x="0" y="0" width="14" height="2"/><rect x="0" y="3.3" width="14" height="2"/><rect x="0" y="6.6" width="14" height="2"/><rect x="0" y="10" width="14" height="2"/></g></svg><div class="t" style="left:221.5px;top:621.86px;font-size:10.8px;line-height:10.8px;color:#111">Chart Overview</div><svg class="a" style="left:310px;top:625px;" width="8" height="5" viewBox="0 0 8 5"><path d="M0 0 H8 L4 4 Z" fill="#808080"/></svg><div class="a" style="left:435.5px;top:616px;width:1px;height:24px;background:#9A9A9A"></div><div class="t" style="left:441.5px;top:621.86px;font-size:10.8px;line-height:10.8px;color:#111">Change Order</div><svg class="a" style="left:520.5px;top:625px;" width="8" height="5" viewBox="0 0 8 5"><path d="M0 0 H8 L4 4 Z" fill="#808080"/></svg><div class="a" style="left:534px;top:616px;width:1px;height:24px;background:#9A9A9A"></div><div class="t" style="left:540px;top:621.86px;font-size:10.8px;line-height:10.8px;color:#111">Show Percentage</div><svg class="a" style="left:637px;top:625px;" width="8" height="5" viewBox="0 0 8 5"><path d="M0 0 H8 L4 4 Z" fill="#808080"/></svg><div class="a" style="left:649.5px;top:616px;width:1px;height:24px;background:#9A9A9A"></div><div class="t" style="left:656px;top:621.86px;font-size:10.8px;line-height:10.8px;color:#111">Center Hole</div><svg class="a" style="left:724px;top:625px;" width="8" height="5" viewBox="0 0 8 5"><path d="M0 0 H8 L4 4 Z" fill="#808080"/></svg><div class="a" style="left:737px;top:616px;width:1px;height:24px;background:#9A9A9A"></div><div class="t" style="left:743px;top:621.86px;font-size:10.8px;line-height:10.8px;color:#111">Single Ring</div><svg class="a" style="left:806px;top:625px;" width="8" height="5" viewBox="0 0 8 5"><path d="M0 0 H8 L4 4 Z" fill="#808080"/></svg><div class="a" style="left:820.5px;top:616px;width:1px;height:24px;background:#9A9A9A"></div><div class="t" style="left:826px;top:621.86px;font-size:10.8px;line-height:10.8px;color:#111">Multiple Ring</div><svg class="a" style="left:898px;top:625px;" width="8" height="5" viewBox="0 0 8 5"><path d="M0 0 H8 L4 4 Z" fill="#808080"/></svg><div class="a" style="left:324px;top:612px;width:58px;height:29px;background:#FFF;border:1px solid #A9A9A9;border-top:none"></div><div class="t" style="left:329px;top:622.03px;font-size:10.6px;line-height:10.6px;font-weight:bold;color:#111">Build</div><svg class="a" style="left:368px;top:625px;" width="8" height="5" viewBox="0 0 8 5"><path d="M0 0 H8 L4 4 Z" fill="#808080"/></svg><div class="t" style="left:387px;top:621.86px;font-size:10.8px;line-height:10.8px;color:#111">Filter</div><svg class="a" style="left:420px;top:625px;" width="8" height="5" viewBox="0 0 8 5"><path d="M0 0 H8 L4 4 Z" fill="#808080"/></svg><div class="a" style="left:911px;top:616px;width:1px;height:24px;background:#9A9A9A"></div><div class="a" style="left:914px;top:614px;width:1px;height:27px;background:#D0D0D0"></div><svg class="a" style="left:921px;top:623px;" width="6" height="10" viewBox="0 0 6 10"><path d="M5 0 V10 L0 5 Z" fill="#6E6E6E"/></svg><svg class="a" style="left:946px;top:623px;" width="6" height="10" viewBox="0 0 6 10"><path d="M0 0 V10 L5 5 Z" fill="#6E6E6E"/></svg><svg class="a" style="left:0;top:0" width="999" height="675" viewBox="0 0 999 675"><path d="M659.60 274.20 L659.60 167.50 A213.4 213.4 0 0 1 739.54 183.04 L699.57 281.97 A106.7 106.7 0 0 0 659.60 274.20 Z" fill="#3D67A0"/><path d="M659.60 380.90 L659.60 274.20 A106.7 106.7 0 0 1 699.57 281.97 Z" fill="#3D67A0"/><path d="M699.57 281.97 L739.54 183.04 A213.4 213.4 0 0 1 872.60 393.93 L766.10 387.41 A106.7 106.7 0 0 0 699.57 281.97 Z" fill="#A13F3E"/><path d="M659.60 380.90 L699.57 281.97 A106.7 106.7 0 0 1 766.10 387.41 Z" fill="#A13F3E"/><path d="M766.10 387.41 L872.60 393.93 A213.4 213.4 0 0 1 863.46 444.00 L761.53 412.45 A106.7 106.7 0 0 0 766.10 387.41 Z" fill="#7B9A46"/><path d="M659.60 380.90 L766.10 387.41 A106.7 106.7 0 0 1 761.53 412.45 Z" fill="#7B9A46"/><path d="M761.53 412.45 L863.46 444.00 A213.4 213.4 0 0 1 751.47 573.51 L705.54 477.21 A106.7 106.7 0 0 0 761.53 412.45 Z" fill="#6A4F8B"/><path d="M659.60 380.90 L761.53 412.45 A106.7 106.7 0 0 1 705.54 477.21 Z" fill="#6A4F8B"/><path d="M705.54 477.21 L751.47 573.51 A213.4 213.4 0 0 1 724.84 584.08 L692.22 482.49 A106.7 106.7 0 0 0 705.54 477.21 Z" fill="#3A8B9E"/><path d="M659.60 380.90 L705.54 477.21 A106.7 106.7 0 0 1 692.22 482.49 Z" fill="#3A8B9E"/><path d="M692.22 482.49 L724.84 584.08 A213.4 213.4 0 0 1 720.57 585.41 L690.08 483.15 A106.7 106.7 0 0 0 692.22 482.49 Z" fill="#D9792F"/><path d="M659.60 380.90 L692.22 482.49 A106.7 106.7 0 0 1 690.08 483.15 Z" fill="#D9792F"/><path d="M690.08 483.15 L720.57 585.41 A213.4 213.4 0 0 1 624.01 591.31 L641.81 486.11 A106.7 106.7 0 0 0 690.08 483.15 Z" fill="#4D80C2"/><path d="M659.60 380.90 L690.08 483.15 A106.7 106.7 0 0 1 641.81 486.11 Z" fill="#4D80C2"/><path d="M641.81 486.11 L624.01 591.31 A213.4 213.4 0 0 1 617.79 590.16 L638.69 485.53 A106.7 106.7 0 0 0 641.81 486.11 Z" fill="#CD4A4A"/><path d="M659.60 380.90 L641.81 486.11 A106.7 106.7 0 0 1 638.69 485.53 Z" fill="#CD4A4A"/><path d="M638.69 485.53 L617.79 590.16 A213.4 213.4 0 0 1 582.08 579.72 L620.84 480.31 A106.7 106.7 0 0 0 638.69 485.53 Z" fill="#8DB250"/><path d="M659.60 380.90 L638.69 485.53 A106.7 106.7 0 0 1 620.84 480.31 Z" fill="#8DB250"/><path d="M620.84 480.31 L582.08 579.72 A213.4 213.4 0 0 1 476.11 489.85 L567.85 435.37 A106.7 106.7 0 0 0 620.84 480.31 Z" fill="#7B5EA3"/><path d="M659.60 380.90 L620.84 480.31 A106.7 106.7 0 0 1 567.85 435.37 Z" fill="#7B5EA3"/><path d="M567.85 435.37 L476.11 489.85 A213.4 213.4 0 0 1 455.09 441.87 L557.35 411.38 A106.7 106.7 0 0 0 567.85 435.37 Z" fill="#45A8C5"/><path d="M659.60 380.90 L567.85 435.37 A106.7 106.7 0 0 1 557.35 411.38 Z" fill="#45A8C5"/><path d="M557.40 411.56 L455.20 442.22 A213.4 213.4 0 0 1 453.71 437.03 L556.66 408.97 A106.7 106.7 0 0 0 557.40 411.56 Z" fill="#EE8632"/><path d="M659.60 380.90 L557.40 411.56 A106.7 106.7 0 0 1 556.66 408.97 Z" fill="#EE8632"/><path d="M556.66 408.97 L453.71 437.03 A213.4 213.4 0 0 1 452.81 433.61 L556.21 407.25 A106.7 106.7 0 0 0 556.66 408.97 Z" fill="#F4F7FA"/><path d="M659.60 380.90 L556.66 408.97 A106.7 106.7 0 0 1 556.21 407.25 Z" fill="#F4F7FA"/><path d="M556.21 407.25 L452.81 433.61 A213.4 213.4 0 0 1 446.55 368.62 L553.08 374.76 A106.7 106.7 0 0 0 556.21 407.25 Z" fill="#7B9A47"/><path d="M659.60 380.90 L556.21 407.25 A106.7 106.7 0 0 1 553.08 374.76 Z" fill="#7B9A47"/><path d="M553.08 374.76 L446.55 368.62 A213.4 213.4 0 0 1 459.58 306.51 L559.59 343.71 A106.7 106.7 0 0 0 553.08 374.76 Z" fill="#5F3F8B"/><path d="M659.60 380.90 L553.08 374.76 A106.7 106.7 0 0 1 559.59 343.71 Z" fill="#5F3F8B"/><path d="M559.59 343.71 L459.58 306.51 A213.4 213.4 0 0 1 659.60 167.50 L659.60 274.20 A106.7 106.7 0 0 0 559.59 343.71 Z" fill="#3C8BA2"/><path d="M659.60 380.90 L559.59 343.71 A106.7 106.7 0 0 1 659.60 274.20 Z" fill="#3C8BA2"/><path d="M668.77 274.59 L677.94 168.29" stroke="#FFF" stroke-width="0.7" stroke-opacity="0.75"/><path d="M673.21 275.07 L686.83 169.24" stroke="#FFF" stroke-width="0.7" stroke-opacity="0.75"/><path d="M677.17 275.66 L694.75 170.41" stroke="#FFF" stroke-width="0.7" stroke-opacity="0.75"/><path d="M679.23 276.02 L698.86 171.14" stroke="#FFF" stroke-width="0.7" stroke-opacity="0.75"/><path d="M681.60 276.49 L703.60 172.09" stroke="#FFF" stroke-width="0.7" stroke-opacity="0.75"/><path d="M694.69 280.14 L729.78 179.37" stroke="#FFF" stroke-width="0.7" stroke-opacity="0.75"/><path d="M711.00 287.40 L762.41 193.90" stroke="#FFF" stroke-width="0.7" stroke-opacity="0.75"/><path d="M711.57 287.71 L763.55 194.53" stroke="#FFF" stroke-width="0.7" stroke-opacity="0.75"/><path d="M751.82 327.23 L844.04 273.56" stroke="#FFF" stroke-width="0.7" stroke-opacity="0.75"/><path d="M766.19 385.74 L872.78 390.58" stroke="#FFF" stroke-width="0.7" stroke-opacity="0.75"/><path d="M766.15 386.48 L872.71 392.07" stroke="#FFF" stroke-width="0.7" stroke-opacity="0.75"/><path d="M764.55 400.16 L869.49 419.42" stroke="#FFF" stroke-width="0.7" stroke-opacity="0.75"/><path d="M762.66 408.52 L865.73 436.13" stroke="#FFF" stroke-width="0.7" stroke-opacity="0.75"/><path d="M755.17 428.34 L850.74 475.79" stroke="#FFF" stroke-width="0.7" stroke-opacity="0.75"/><path d="M750.58 436.65 L841.55 492.40" stroke="#FFF" stroke-width="0.7" stroke-opacity="0.75"/><path d="M750.19 437.28 L840.77 493.67" stroke="#FFF" stroke-width="0.7" stroke-opacity="0.75"/><path d="M749.79 437.92 L839.98 494.93" stroke="#FFF" stroke-width="0.7" stroke-opacity="0.75"/><path d="M732.78 458.55 L805.95 536.21" stroke="#FFF" stroke-width="0.7" stroke-opacity="0.75"/><path d="M723.66 466.23 L787.73 551.55" stroke="#FFF" stroke-width="0.7" stroke-opacity="0.75"/><path d="M721.11 468.09 L782.61 555.28" stroke="#FFF" stroke-width="0.7" stroke-opacity="0.75"/><path d="M719.27 469.36 L778.93 557.82" stroke="#FFF" stroke-width="0.7" stroke-opacity="0.75"/><path d="M703.85 477.99 L748.10 575.09" stroke="#FFF" stroke-width="0.7" stroke-opacity="0.75"/><path d="M702.66 478.53 L745.72 576.15" stroke="#FFF" stroke-width="0.7" stroke-opacity="0.75"/><path d="M701.80 478.90 L744.01 576.90" stroke="#FFF" stroke-width="0.7" stroke-opacity="0.75"/><path d="M700.60 479.41 L741.61 577.91" stroke="#FFF" stroke-width="0.7" stroke-opacity="0.75"/><path d="M698.10 480.41 L736.60 579.93" stroke="#FFF" stroke-width="0.7" stroke-opacity="0.75"/><path d="M694.51 481.73 L729.43 582.55" stroke="#FFF" stroke-width="0.7" stroke-opacity="0.75"/><path d="M682.15 485.19 L704.70 589.48" stroke="#FFF" stroke-width="0.7" stroke-opacity="0.75"/><path d="M681.42 485.35 L703.24 589.79" stroke="#FFF" stroke-width="0.7" stroke-opacity="0.75"/><path d="M666.30 487.39 L673.00 593.88" stroke="#FFF" stroke-width="0.7" stroke-opacity="0.75"/><path d="M665.56 487.43 L671.51 593.97" stroke="#FFF" stroke-width="0.7" stroke-opacity="0.75"/><path d="M640.25 485.83 L620.89 590.76" stroke="#FFF" stroke-width="0.7" stroke-opacity="0.75"/><path d="M637.05 485.19 L614.50 589.48" stroke="#FFF" stroke-width="0.7" stroke-opacity="0.75"/><path d="M636.32 485.03 L613.05 589.16" stroke="#FFF" stroke-width="0.7" stroke-opacity="0.75"/><path d="M635.42 484.82 L611.23 588.75" stroke="#FFF" stroke-width="0.7" stroke-opacity="0.75"/><path d="M630.19 483.47 L600.78 586.03" stroke="#FFF" stroke-width="0.7" stroke-opacity="0.75"/><path d="M629.47 483.26 L599.35 585.62" stroke="#FFF" stroke-width="0.7" stroke-opacity="0.75"/><path d="M628.76 483.05 L597.92 585.19" stroke="#FFF" stroke-width="0.7" stroke-opacity="0.75"/><path d="M625.21 481.91 L590.83 582.91" stroke="#FFF" stroke-width="0.7" stroke-opacity="0.75"/><path d="M624.51 481.66 L589.42 582.43" stroke="#FFF" stroke-width="0.7" stroke-opacity="0.75"/><path d="M618.77 479.48 L577.94 578.06" stroke="#FFF" stroke-width="0.7" stroke-opacity="0.75"/><path d="M617.74 479.04 L575.88 577.19" stroke="#FFF" stroke-width="0.7" stroke-opacity="0.75"/><path d="M612.16 476.47 L564.71 572.04" stroke="#FFF" stroke-width="0.7" stroke-opacity="0.75"/><path d="M608.52 474.58 L557.45 568.26" stroke="#FFF" stroke-width="0.7" stroke-opacity="0.75"/><path d="M607.55 474.04 L555.49 567.18" stroke="#FFF" stroke-width="0.7" stroke-opacity="0.75"/><path d="M606.57 473.49 L553.55 566.08" stroke="#FFF" stroke-width="0.7" stroke-opacity="0.75"/><path d="M605.61 472.93 L551.61 564.96" stroke="#FFF" stroke-width="0.7" stroke-opacity="0.75"/><path d="M604.65 472.36 L549.69 563.82" stroke="#FFF" stroke-width="0.7" stroke-opacity="0.75"/><path d="M593.03 464.29 L526.46 547.68" stroke="#FFF" stroke-width="0.7" stroke-opacity="0.75"/><path d="M590.45 462.16 L521.29 543.41" stroke="#FFF" stroke-width="0.7" stroke-opacity="0.75"/><path d="M563.70 427.67 L467.80 474.45" stroke="#FFF" stroke-width="0.7" stroke-opacity="0.75"/><path d="M563.46 427.17 L467.31 473.44" stroke="#FFF" stroke-width="0.7" stroke-opacity="0.75"/><path d="M563.21 426.67 L466.83 472.43" stroke="#FFF" stroke-width="0.7" stroke-opacity="0.75"/><path d="M562.98 426.16 L466.35 471.42" stroke="#FFF" stroke-width="0.7" stroke-opacity="0.75"/><path d="M562.74 425.66 L465.88 470.41" stroke="#FFF" stroke-width="0.7" stroke-opacity="0.75"/><path d="M562.51 425.15 L465.41 469.40" stroke="#FFF" stroke-width="0.7" stroke-opacity="0.75"/><path d="M562.20 424.47 L464.80 468.04" stroke="#FFF" stroke-width="0.7" stroke-opacity="0.75"/><path d="M561.31 422.42 L463.02 463.94" stroke="#FFF" stroke-width="0.7" stroke-opacity="0.75"/><path d="M559.79 418.62 L459.98 456.33" stroke="#FFF" stroke-width="0.7" stroke-opacity="0.75"/><path d="M557.14 410.67 L454.67 440.44" stroke="#FFF" stroke-width="0.7" stroke-opacity="0.75"/><path d="M556.88 409.77 L454.16 438.65" stroke="#FFF" stroke-width="0.7" stroke-opacity="0.75"/><path d="M553.48 392.05 L447.37 403.21" stroke="#FFF" stroke-width="0.7" stroke-opacity="0.75"/><path d="M553.02 385.93 L446.44 390.95" stroke="#FFF" stroke-width="0.7" stroke-opacity="0.75"/><path d="M552.95 384.07 L446.29 387.23" stroke="#FFF" stroke-width="0.7" stroke-opacity="0.75"/><path d="M552.90 381.83 L446.21 382.76" stroke="#FFF" stroke-width="0.7" stroke-opacity="0.75"/><path d="M553.34 371.23 L447.08 361.56" stroke="#FFF" stroke-width="0.7" stroke-opacity="0.75"/><path d="M553.52 369.38 L447.45 357.85" stroke="#FFF" stroke-width="0.7" stroke-opacity="0.75"/><path d="M554.90 360.36 L450.19 339.82" stroke="#FFF" stroke-width="0.7" stroke-opacity="0.75"/><path d="M558.01 348.28 L456.42 315.66" stroke="#FFF" stroke-width="0.7" stroke-opacity="0.75"/><path d="M558.59 346.51 L457.59 312.13" stroke="#FFF" stroke-width="0.7" stroke-opacity="0.75"/><path d="M580.06 309.78 L500.52 238.66" stroke="#FFF" stroke-width="0.7" stroke-opacity="0.75"/><path d="M587.24 302.48 L514.88 224.07" stroke="#FFF" stroke-width="0.7" stroke-opacity="0.75"/><path d="M594.20 296.59 L528.81 212.28" stroke="#FFF" stroke-width="0.7" stroke-opacity="0.75"/><path d="M595.54 295.57 L531.47 210.25" stroke="#FFF" stroke-width="0.7" stroke-opacity="0.75"/><path d="M596.43 294.91 L533.26 208.91" stroke="#FFF" stroke-width="0.7" stroke-opacity="0.75"/><path d="M601.02 291.72 L542.44 202.54" stroke="#FFF" stroke-width="0.7" stroke-opacity="0.75"/><path d="M624.16 280.26 L588.72 179.62" stroke="#FFF" stroke-width="0.7" stroke-opacity="0.75"/><path d="M642.91 275.51 L626.22 170.13" stroke="#FFF" stroke-width="0.7" stroke-opacity="0.75"/><path d="M648.45 274.78 L637.29 168.67" stroke="#FFF" stroke-width="0.7" stroke-opacity="0.75"/><path d="M651.23 274.53 L642.86 168.16" stroke="#FFF" stroke-width="0.7" stroke-opacity="0.75"/><path d="M652.53 274.43 L645.46 167.97" stroke="#FFF" stroke-width="0.7" stroke-opacity="0.75"/><circle cx="659.6" cy="380.9" r="106.7" fill="none" stroke="#FFF" stroke-width="1.4"/><path d="M659.60 380.90 L659.60 167.50" stroke="#FFF" stroke-width="1.3" stroke-opacity="1"/><path d="M659.60 380.90 L739.54 183.04" stroke="#FFF" stroke-width="1.3" stroke-opacity="1"/><path d="M659.60 380.90 L872.60 393.93" stroke="#FFF" stroke-width="1.3" stroke-opacity="1"/><path d="M659.60 380.90 L863.46 444.00" stroke="#FFF" stroke-width="1.3" stroke-opacity="1"/><path d="M659.60 380.90 L751.47 573.51" stroke="#FFF" stroke-width="1.3" stroke-opacity="1"/><path d="M659.60 380.90 L724.84 584.08" stroke="#FFF" stroke-width="1.0" stroke-opacity="1"/><path d="M659.60 380.90 L720.57 585.41" stroke="#FFF" stroke-width="1.0" stroke-opacity="1"/><path d="M659.60 380.90 L624.01 591.31" stroke="#FFF" stroke-width="1.3" stroke-opacity="1"/><path d="M659.60 380.90 L617.79 590.16" stroke="#FFF" stroke-width="1.3" stroke-opacity="1"/><path d="M659.60 380.90 L582.08 579.72" stroke="#FFF" stroke-width="1.3" stroke-opacity="1"/><path d="M659.60 380.90 L476.11 489.85" stroke="#FFF" stroke-width="1.3" stroke-opacity="1"/><path d="M659.60 380.90 L455.20 442.22" stroke="#FFF" stroke-width="1.3" stroke-opacity="1"/><path d="M659.60 380.90 L453.71 437.03" stroke="#FFF" stroke-width="1.3" stroke-opacity="1"/><path d="M659.60 380.90 L452.81 433.61" stroke="#FFF" stroke-width="1.3" stroke-opacity="1"/><path d="M659.60 380.90 L446.55 368.62" stroke="#FFF" stroke-width="1.3" stroke-opacity="1"/><path d="M659.60 380.90 L459.58 306.51" stroke="#FFF" stroke-width="1.3" stroke-opacity="1"/><g font-family="Liberation Sans, sans-serif" font-size="9.8"><text transform="translate(678.83 281.95) rotate(-79.00)" text-anchor="end" dominant-baseline="central" fill="#F2F2F2">Appliances</text><text transform="translate(668.54 173.59) rotate(-87.53)" text-anchor="end" dominant-baseline="central" fill="#F2F2F2">California</text><text transform="translate(715.05 180.95) rotate(-74.50)" text-anchor="end" dominant-baseline="central" fill="#F2F2F2">Ohio</text><text transform="translate(732.61 186.67) rotate(-69.40)" text-anchor="end" dominant-baseline="central" fill="#F2F2F2">Texas</text><text transform="translate(744.85 327.11) rotate(-32.25)" text-anchor="end" dominant-baseline="central" fill="#F2F2F2">Binders and Binde...</text><text transform="translate(748.93 193.61) rotate(-64.50)" text-anchor="end" dominant-baseline="central" fill="#F2F2F2">California</text><text transform="translate(805.30 233.15) rotate(-45.40)" text-anchor="end" dominant-baseline="central" fill="#F2F2F2">New York</text><text transform="translate(861.78 334.22) rotate(-13.00)" text-anchor="end" dominant-baseline="central" fill="#F2F2F2">Ohio</text><text transform="translate(758.76 399.01) rotate(10.35)" text-anchor="end" dominant-baseline="central" fill="#1A1A1A" stroke="#1A1A1A" stroke-width="0.3">Bookcases</text><text transform="translate(865.42 407.27) rotate(7.30)" text-anchor="end" dominant-baseline="central" fill="#1A1A1A" stroke="#1A1A1A" stroke-width="0.3">Massachusetts</text><text transform="translate(861.94 426.87) rotate(12.80)" text-anchor="end" dominant-baseline="central" fill="#1A1A1A" stroke="#1A1A1A" stroke-width="0.3">New Hampshire</text><text transform="translate(735.85 446.83) rotate(40.85)" text-anchor="end" dominant-baseline="central" fill="#F2F2F2">Chairs &amp; Chairmats</text><text transform="translate(852.26 457.96) rotate(21.80)" text-anchor="end" dominant-baseline="central" fill="#F2F2F2">California</text><text transform="translate(841.08 481.50) rotate(29.00)" text-anchor="end" dominant-baseline="central" fill="#F2F2F2">Illinois</text><text transform="translate(819.71 512.89) rotate(39.50)" text-anchor="end" dominant-baseline="central" fill="#F2F2F2">New York</text><text transform="translate(792.98 539.85) rotate(50.00)" text-anchor="end" dominant-baseline="central" fill="#F2F2F2">Ohio</text><text transform="translate(762.72 560.96) rotate(60.20)" text-anchor="end" dominant-baseline="central" fill="#F2F2F2">Vermont</text><text transform="translate(665.75 481.51) rotate(86.50)" text-anchor="end" dominant-baseline="central" fill="#F2F2F2">Envelopes</text><text transform="translate(710.15 582.15) rotate(75.90)" text-anchor="end" dominant-baseline="central" fill="#F2F2F2">California</text><text transform="translate(687.04 586.58) rotate(82.40)" text-anchor="end" dominant-baseline="central" fill="#F2F2F2">New York</text><text transform="translate(647.92 589.87) rotate(-86.80)" text-anchor="start" dominant-baseline="central" fill="#F2F2F2">Virginia</text><text transform="translate(592.33 460.22) rotate(-49.70)" text-anchor="start" dominant-baseline="central" fill="#F2F2F2">Office Machines</text><text transform="translate(572.14 571.05) rotate(-65.30)" text-anchor="start" dominant-baseline="central" fill="#F2F2F2">Maine</text><text transform="translate(560.37 565.18) rotate(-61.70)" text-anchor="start" dominant-baseline="central" fill="#F2F2F2">Massachusetts</text><text transform="translate(539.55 552.35) rotate(-55.00)" text-anchor="start" dominant-baseline="central" fill="#F2F2F2">Oregon</text><text transform="translate(499.50 515.72) rotate(-40.10)" text-anchor="start" dominant-baseline="central" fill="#F2F2F2">Washington</text><text transform="translate(564.33 422.62) rotate(-23.65)" text-anchor="start" dominant-baseline="central" fill="#1A1A1A" stroke="#1A1A1A" stroke-width="0.3">Paper</text><text transform="translate(476.01 481.41) rotate(-28.70)" text-anchor="start" dominant-baseline="central" fill="#1A1A1A" stroke="#1A1A1A" stroke-width="0.3">California</text><text transform="translate(453.74 418.68) rotate(-10.40)" text-anchor="start" dominant-baseline="central" fill="#1A1A1A" stroke="#1A1A1A" stroke-width="0.3">California</text><text transform="translate(450.35 376.52) rotate(1.20)" text-anchor="start" dominant-baseline="central" fill="#1A1A1A" stroke="#1A1A1A" stroke-width="0.3">Texas</text><text transform="translate(557.82 359.54) rotate(11.85)" text-anchor="start" dominant-baseline="central" fill="#F2F2F2">Tables</text><text transform="translate(452.65 349.60) rotate(8.60)" text-anchor="start" dominant-baseline="central" fill="#F2F2F2">New York</text><text transform="translate(456.88 328.85) rotate(14.40)" text-anchor="start" dominant-baseline="central" fill="#F2F2F2">Ohio</text><text transform="translate(600.25 295.50) rotate(55.20)" text-anchor="start" dominant-baseline="central" fill="#F2F2F2">Telephones and C...</text><text transform="translate(480.38 272.79) rotate(31.10)" text-anchor="start" dominant-baseline="central" fill="#F2F2F2">California</text><text transform="translate(510.32 234.20) rotate(44.50)" text-anchor="start" dominant-baseline="central" fill="#F2F2F2">Illinois</text><text transform="translate(524.37 221.16) rotate(49.75)" text-anchor="start" dominant-baseline="central" fill="#F2F2F2">Kansas</text><text transform="translate(566.54 193.43) rotate(63.60)" text-anchor="start" dominant-baseline="central" fill="#F2F2F2">New York</text><text transform="translate(608.26 178.00) rotate(75.80)" text-anchor="start" dominant-baseline="central" fill="#F2F2F2">Oregon</text></g></svg></body></html>
